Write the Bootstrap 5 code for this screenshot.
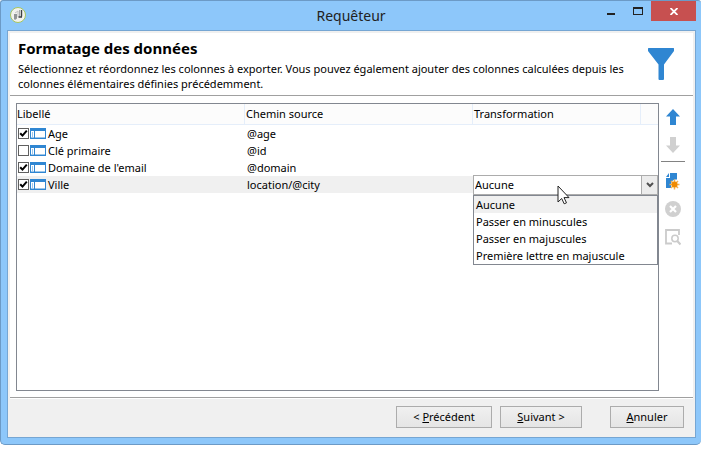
<!DOCTYPE html>
<html lang="fr">
<head>
<meta charset="utf-8">
<meta name="viewport" content="width=device-width, initial-scale=1">
<title>Requêteur</title>
<link href="https://cdn.jsdelivr.net/npm/bootstrap@5.3.0/dist/css/bootstrap.min.css" rel="stylesheet">
<style>
body{font-family:"Noto Sans","Open Sans",sans-serif;font-size:11px;line-height:17px;color:#000;background:#fff}
.desktop{min-height:100vh;padding-bottom:6px}
.app-window{background:#8dc7fa;border:solid #6c9ac6;border-width:1px 0 1px 1px;border-radius:3px 3px 5px 5px;padding:0 5px 6px 6px}
.titlebar{height:29px;padding-left:3px}
.titlebar h1{font-size:14px;line-height:18px;font-weight:400;color:#222;padding:6px 0 0 78px}
.win-btn{border:0;background:none;padding:0;height:20px;width:27px;display:flex;justify-content:center;align-items:center}
.win-close{width:45px;background:#c75050}
.win-client{border:1px solid #76a6d3;background:#f0f0f0;padding:2px 2px 0}
.pane{background:#fff}
.intro{padding:5px 18px 4px 8px;border-bottom:1px solid #a0a0a0}
.intro h2{font-size:15px;line-height:20px;font-weight:700;margin-bottom:3px}
.intro p{line-height:15px}
.workarea{padding:7px 8px 6px 6px;border-bottom:1px solid #a0a0a0}
.grid-box{border:1px solid #828790}
.grid-box table{table-layout:fixed;width:100%;border-collapse:separate;border-spacing:0}
.grid-box th{height:21px;padding:0 0 0 1px;font-weight:400;background:#fcfcfc;border:solid #e5eefa;border-width:0 1px 1px 0;line-height:18px}
.grid-box thead th:first-child{padding-left:0}
.grid-box thead th:last-child{border-right:0}
.grid-box td{height:17px;padding:0 0 0 2px}
.grid-box td:first-child{padding-left:1px}
.c-change{width:168px}.c-end{width:17px}
.chosen td{background:#f0f0f0}
.tick{appearance:none;margin:0 1px 0 0;width:11px;height:11px;border:1px solid #606060;background:#fff;flex:none}
.tick:checked{background:url("data:image/svg+xml,%3Csvg xmlns='http://www.w3.org/2000/svg' viewBox='0 0 9 9'%3E%3Cpath d='M1.200 4.200 3.500 6.600 7.800 1.700' fill='none' stroke='%23000' stroke-width='2'/%3E%3C/svg%3E") center/9px no-repeat #fff}
.line{height:17px}
.line label{margin-left:2px}
.combo-cell{height:17px}
.combo{top:-1px;left:-2px;right:-17px;z-index:2}
.combo select{appearance:none;display:block;width:100%;height:20px;border:1px solid #acacac;border-radius:0;padding:0 18px 0 1px;background:#fff;line-height:18px;color:#000}
.combo .arrow{top:1px;right:1px;width:16px;height:18px;border-left:1px solid #acacac;background:#ececec;pointer-events:none;display:flex;align-items:center;justify-content:center}
.choices{border:1px solid #828790;background:#fff}
.choices li{padding-left:2px}
.choices .current{background:#f0f0f0}
.pointer{left:84px;top:10px;z-index:3;pointer-events:none}
.tools{width:24px;margin-left:2px;padding-top:5px}
.tools button{border:0;background:none;padding:0;width:16px;height:18px;display:flex;align-items:center;justify-content:center}
.tools button + button{margin-top:10px}
.tools hr{width:24px;margin:7px 0 10px;border-top:1px solid #828282;opacity:1}
.footer-bar{border-top:1px solid #fff;padding:7px 9px 9px}
.push{height:22px;border:1px solid #acacac;border-radius:0;padding:0;line-height:18px;background:linear-gradient(#f0f0f0,#e5e5e5);color:#000}
.w-prev{width:96px}.w-next{width:82px;margin:0 28px 0 8px}.w-cancel{width:74px}
</style>
<script src="https://cdn.jsdelivr.net/npm/bootstrap@5.3.0/dist/js/bootstrap.bundle.min.js"></script>
</head>
<body>
<svg class="d-none">
<symbol id="field" viewBox="0 0 16 11"><rect width="16" height="11" fill="#2f86d2"/><path fill="#fff" d="M1 3h3v7H1zM5 3h10v7H5z"/><path fill="#9dc6ea" d="M2 4h1v5H2zM5 9h10v1H5zM1 9h3v1H1z"/></symbol>
</svg>
<div class="desktop d-flex flex-column">
<div class="app-window flex-grow-1 d-flex flex-column">
  <header class="titlebar d-flex align-items-start">
    <svg class="mt-1" width="17" height="20" viewBox="0 0 17 20"><circle cx="8" cy="10" r="7.500" fill="#f2f2ee" stroke="#a8c65d"/><path d="M4 9h3v4.500L5 15l-1-1z" fill="#929597"/><path d="m5 8 3-2v6" fill="none" stroke="#c4c4c4"/><path d="M9.500 5v6.500" stroke="#aaa"/><path d="M11.500 5v6.500M12 12H8.500" fill="none" stroke="#3e4044" stroke-width="1.400"/></svg>
    <h1 class="flex-grow-1 text-center mb-0">Requêteur</h1>
    <button class="win-btn" aria-label="Réduire"><svg width="8" height="20"><path fill="#222" d="M0 12h8v2H0z"/></svg></button>
    <button class="win-btn" aria-label="Agrandir"><svg width="10" height="20"><path fill="#222" fill-rule="evenodd" d="M0 6h10v8H0zM1 8v5h8V8z"/></svg></button>
    <button class="win-btn win-close" aria-label="Fermer"><svg width="8" height="7"><path d="m.5 0 7 7m0-7-7 7" stroke="#fff" stroke-width="1.800"/></svg></button>
  </header>
  <main class="win-client flex-grow-1 d-flex flex-column">
    <div class="pane flex-grow-1 d-flex flex-column">
      <div class="intro d-flex justify-content-between">
        <div><h2>Formatage des données</h2>
        <p class="mb-0">Sélectionnez et réordonnez les colonnes à exporter. Vous pouvez également ajouter des colonnes calculées depuis les colonnes élémentaires définies précédemment.</p></div>
        <svg class="flex-shrink-0 mt-2" width="28" height="34" viewBox="0 0 28 34"><path fill="#2f86d2" d="M1.500 2h25q.5 0 .5.500V5L17 18.500V33q0 1-1 1h-3.500q-1 0-1-1V18.500L1 5V2.500z"/></svg>
      </div>
      <div class="workarea flex-grow-1 d-flex">
        <div class="grid-box flex-grow-1">
          <table>
            <colgroup><col><col><col class="c-change"><col class="c-end"></colgroup>
            <thead><tr><th>Libellé</th><th>Chemin source</th><th>Transformation</th><th></th></tr></thead>
            <tbody>
              <tr><td><div class="line d-flex align-items-center"><input class="tick" type="checkbox" id="f1" checked><svg width="16" height="11"><use href="#field"/></svg><label for="f1">Age</label></div></td><td>@age</td><td></td><td></td></tr>
              <tr><td><div class="line d-flex align-items-center"><input class="tick" type="checkbox" id="f2"><svg width="16" height="11"><use href="#field"/></svg><label for="f2">Clé primaire</label></div></td><td>@id</td><td></td><td></td></tr>
              <tr><td><div class="line d-flex align-items-center"><input class="tick" type="checkbox" id="f3" checked><svg width="16" height="11"><use href="#field"/></svg><label for="f3">Domaine de l'email</label></div></td><td>@domain</td><td></td><td></td></tr>
              <tr class="chosen"><td><div class="line d-flex align-items-center"><input class="tick" type="checkbox" id="f4" checked><svg width="16" height="11"><use href="#field"/></svg><label for="f4">Ville</label></div></td><td>location/@city</td>
              <td><div class="combo-cell position-relative"><div class="combo position-absolute">
                <select aria-label="Transformation"><option>Aucune</option><option>Passer en minuscules</option><option>Passer en majuscules</option><option>Première lettre en majuscule</option></select>
                <span class="arrow position-absolute"><svg width="8" height="6"><path d="m1 1 3 3 3-3" fill="none" stroke="#505050" stroke-width="2"/></svg></span>
                <ul class="choices list-unstyled mb-0"><li class="current">Aucune</li><li>Passer en minuscules</li><li>Passer en majuscules</li><li>Première lettre en majuscule</li></ul>
                <svg class="pointer position-absolute" width="13" height="20" viewBox="0 0 13 20"><path d="M1 1v16l3.700-3.500 2.500 5.300 2.300-1-2.500-5.200H12z" fill="#fff" stroke="#222"/></svg>
              </div></div></td><td></td></tr>
            </tbody>
          </table>
        </div>
        <div class="tools d-flex flex-column align-items-center">
          <button aria-label="Monter"><svg width="16" height="18"><path fill="#2f86d2" d="M8 1 15 8.500h-4V17H5V8.500H1z"/></svg></button>
          <button aria-label="Descendre"><svg width="16" height="18"><path fill="#d0d0d0" d="M8 17 15 9.500h-4V1H5v8.500H1z"/></svg></button>
          <hr>
          <button aria-label="Ajouter une colonne calculée"><svg width="16" height="18"><path fill="#2f86d2" d="M5 1h7v6.500a5 5 0 0 0-6 5V16H1V6h4zM4 1v4H1z"/><path d="M9.500 7.500v10M4.500 12.500h10M6 9l7 7m0-7-7 7" stroke="#f6b04a" stroke-width="1.500"/><circle cx="9.500" cy="12.500" r="3" fill="#ef8a00"/></svg></button>
          <button aria-label="Supprimer"><svg width="16" height="18"><circle cx="8" cy="9" r="8" fill="#d0d0d0"/><path d="m5 6 6 6m0-6-6 6" stroke="#fff" stroke-width="2.200"/></svg></button>
          <button aria-label="Aperçu"><svg width="16" height="18" fill="none" stroke="#cbcbcb"><path d="M7 15.500H1V2h13v5" stroke-width="1.800"/><circle cx="10" cy="10.500" r="3.200" stroke-width="1.500"/><path d="m12.300 13 3.200 3.500" stroke-width="2.200"/></svg></button>
        </div>
      </div>
    </div>
    <div class="footer-bar d-flex justify-content-end">
      <button class="push w-prev">&lt; <u>P</u>récédent</button>
      <button class="push w-next"><u>S</u>uivant &gt;</button>
      <button class="push w-cancel"><u>A</u>nnuler</button>
    </div>
  </main>
</div>
</div>
</body>
</html>
